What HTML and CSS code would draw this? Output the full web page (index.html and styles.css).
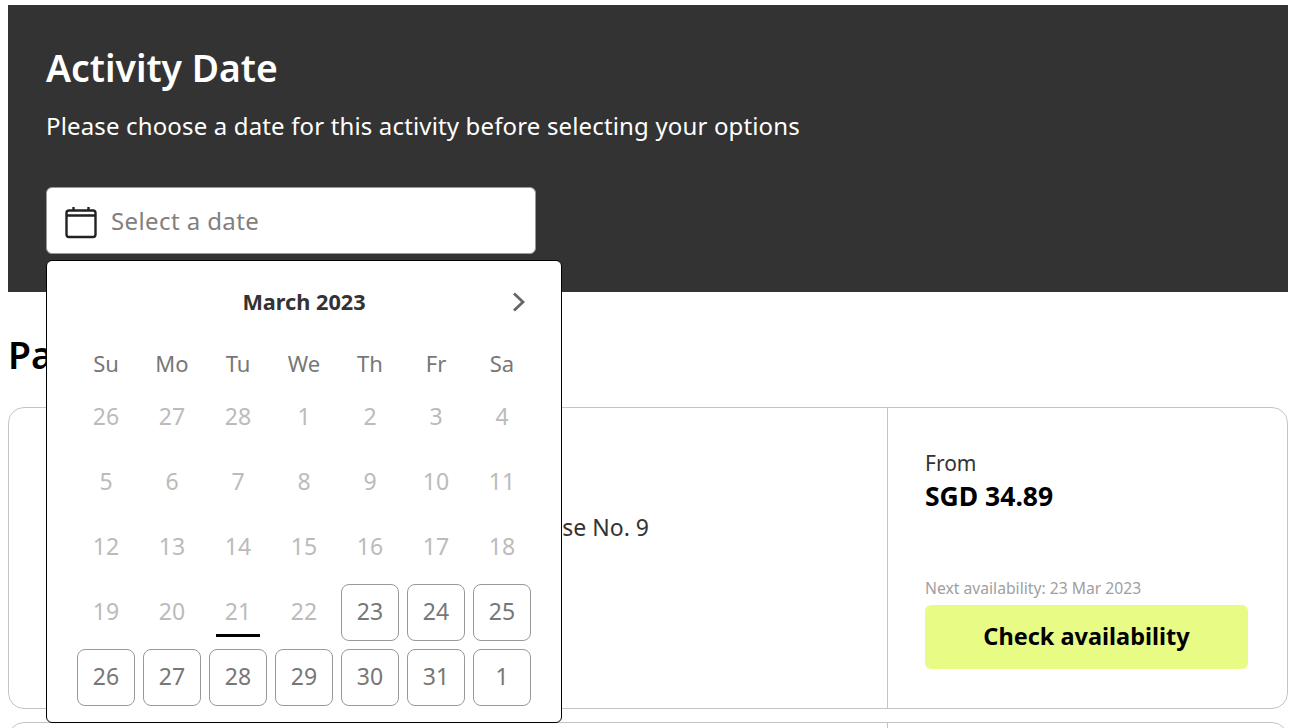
FILE: index.html
```html
<!DOCTYPE html>
<html lang="en">

<head>
    <meta charset="UTF-8" />
    <title>Activity Date</title>
    <link rel="stylesheet" href="styles.css">
</head>

<body>
    <section class="date-panel">
        <h2>Activity Date</h2>
        <p>Please choose a date for this activity before selecting your options</p>
        <div class="date-picker">
            <div class="date-input">
                <svg class="cal-icon" width="34" height="34" viewBox="0 0 34 34" fill="none" stroke="#222" stroke-width="2.4">
                    <rect x="1.5" y="5.5" width="29" height="26.5" rx="2.5" />
                    <path d="M1.5 10.5h29M8.5 2v4M23.5 2v4" />
                </svg>
                <span>Select a date</span>
            </div>
            <div class="calendar">
                <div class="cal-head">
                    <span class="cal-month">March 2023</span>
                    <svg class="cal-next" width="16" height="22" viewBox="0 0 16 22" fill="none" stroke="#666" stroke-width="2.8">
                        <path d="M4 1.5l9 8.5-9 8.5" />
                    </svg>
                </div>
                <div class="cal-grid">
                    <span class="wd">Su</span><span class="wd">Mo</span><span class="wd">Tu</span><span class="wd">We</span><span class="wd">Th</span><span class="wd">Fr</span><span class="wd">Sa</span>
                    <span class="day">26</span><span class="day">27</span><span class="day">28</span><span class="day">1</span><span class="day">2</span><span class="day">3</span><span class="day">4</span>
                    <span class="day">5</span><span class="day">6</span><span class="day">7</span><span class="day">8</span><span class="day">9</span><span class="day">10</span><span class="day">11</span>
                    <span class="day">12</span><span class="day">13</span><span class="day">14</span><span class="day">15</span><span class="day">16</span><span class="day">17</span><span class="day">18</span>
                    <span class="day">19</span><span class="day">20</span><span class="day today">21</span><span class="day">22</span><span class="day open">23</span><span class="day open">24</span><span class="day open">25</span>
                    <span class="day open">26</span><span class="day open">27</span><span class="day open">28</span><span class="day open">29</span><span class="day open">30</span><span class="day open">31</span><span class="day open">1</span>
                </div>
            </div>
        </div>
    </section>

    <h2 class="section-title">Packages</h2>

    <div class="cards">
        <div class="card">
            <div class="card-main">
                <p>Admission to Warehouse No. 9</p>
            </div>
            <div class="card-side">
                <div class="from">From</div>
                <div class="price">SGD 34.89</div>
                <div class="next">Next availability: 23 Mar 2023</div>
                <button class="check">Check availability</button>
            </div>
        </div>
        <div class="card">
            <div class="card-main"></div>
        </div>
    </div>
</body>

</html>
```

FILE: styles.css
```css
html,
body {
    height: 728px;
    overflow: hidden;
}

body {
    margin: 0;
    box-sizing: border-box;
    padding: 5px 14px 0 8px;
    font-family: "Noto Sans", sans-serif;
    color: #333;
    background: #fff;
}

.date-panel {
    height: 287px;
    box-sizing: border-box;
    padding: 38px 38px 0;
    background: #333;
    color: #fff;
}

.date-panel h2 {
    margin: 0;
    font-size: 37.3px;
    line-height: 50px;
    font-weight: 600;
}

.date-panel p {
    margin: 17px 0 0;
    font-size: 24px;
    line-height: 32px;
    letter-spacing: 0.15px;
}

.date-picker {
    position: relative;
    width: 490px;
    margin-top: 45px;
}

.date-input {
    display: flex;
    align-items: center;
    gap: 12px;
    height: 67px;
    box-sizing: border-box;
    padding: 0 0 1px 18px;
    background: #fff;
    border: 1px solid #999;
    border-radius: 6px;
    color: #808080;
    font-size: 24px;
    letter-spacing: 0.4px;
}

.cal-icon {
    margin-top: 4px;
}

.calendar {
    position: absolute;
    top: 73px;
    left: 0;
    z-index: 2;
    width: 516px;
    height: 463px;
    box-sizing: border-box;
    padding: 0 30px;
    background: #fff;
    border: 1px solid #000;
    border-radius: 6px;
    color: #777;
}

.cal-head {
    position: relative;
    height: 80px;
    margin-bottom: 7px;
    display: flex;
    align-items: center;
    justify-content: center;
    color: #333;
}

.cal-month {
    font-size: 21.7px;
    font-weight: 700;
}

.cal-next {
    position: absolute;
    right: 5px;
    top: 31px;
}

.cal-grid {
    display: grid;
    grid-template-columns: repeat(7, 58px);
    grid-template-rows: 33px;
    grid-auto-rows: 57px;
    gap: 8px;
}

.wd,
.day {
    display: flex;
    align-items: center;
    justify-content: center;
}

.wd {
    padding-bottom: 4px;
    font-size: 22px;
}

.day {
    position: relative;
    box-sizing: border-box;
    padding-bottom: 4px;
    font-size: 23px;
    color: #bbb;
    border: 1px solid transparent;
    border-radius: 8px;
}

.day.open {
    color: #777;
    border-color: #999;
}

.day.today::after {
    content: "";
    position: absolute;
    left: 6px;
    right: 6px;
    bottom: 3px;
    height: 3px;
    background: #000;
}

.section-title {
    margin: 38px 0 0;
    height: 77px;
    font-size: 37.3px;
    line-height: 50px;
    font-weight: 600;
    color: #000;
}

.cards {
    height: 321px;
    overflow: hidden;
}

.card {
    display: flex;
    height: 302px;
    box-sizing: border-box;
    margin-bottom: 13px;
    border: 1px solid #c4c4c4;
    border-radius: 16px;
}

.card-main {
    display: flex;
    align-items: center;
    justify-content: flex-end;
    width: 879px;
    box-sizing: border-box;
    padding: 0 238px 62px 0;
    border-right: 1px solid #c4c4c4;
    font-size: 23px;
}

.card-main p {
    margin: 0;
}

.card-side {
    flex: 1;
    display: flex;
    flex-direction: column;
    padding: 40px 39px 39px 37px;
}

.from {
    font-size: 21px;
    line-height: 30px;
}

.price {
    margin-top: 1px;
    font-size: 26.5px;
    line-height: 34px;
    font-weight: 700;
    color: #000;
}

.next {
    margin-top: auto;
    font-size: 15.7px;
    line-height: 22px;
    color: #a0a0a0;
}

.check {
    height: 64px;
    margin-top: 6px;
    padding-bottom: 4px;
    border: 0;
    border-radius: 6px;
    background: #e8fb85;
    color: #000;
    font-family: inherit;
    font-size: 23.5px;
    font-weight: 700;
}
```
